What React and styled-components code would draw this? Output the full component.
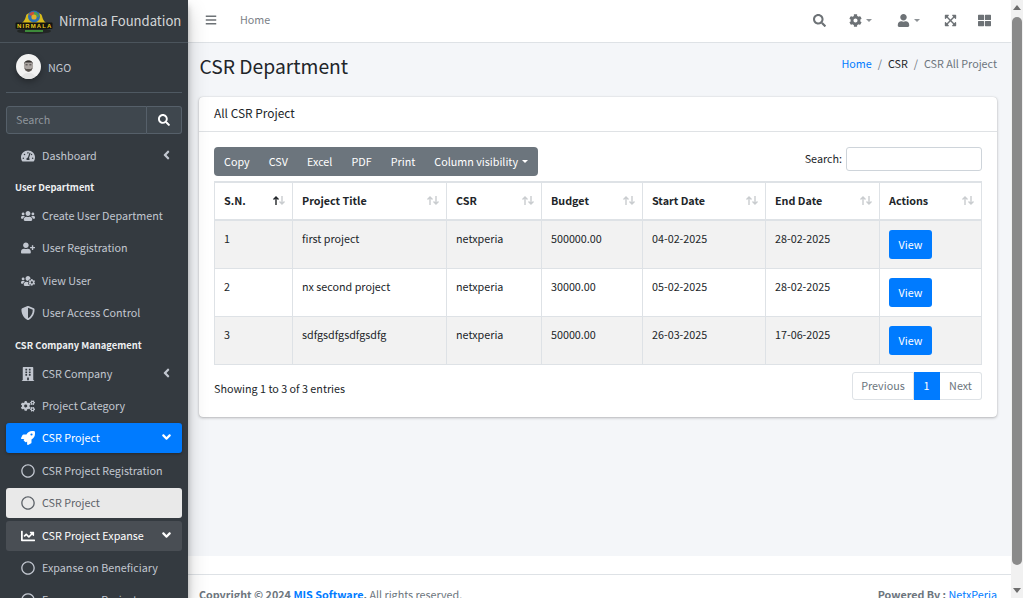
import React from "react";
import styled, { createGlobalStyle } from "styled-components";
import {
  FaAngleDown,
  FaAngleLeft,
  FaBars,
  FaBuilding,
  FaChartLine,
  FaCog,
  FaCogs,
  FaExpandArrowsAlt,
  FaRegCircle,
  FaRocket,
  FaSearch,
  FaShieldAlt,
  FaTachometerAlt,
  FaThLarge,
  FaUser,
  FaUserPlus,
  FaUsers,
  FaUsersCog,
} from "react-icons/fa";

const GlobalStyle = createGlobalStyle`
  html, body {
    margin: 0;
    height: 100%;
    overflow: hidden;
  }
  body {
    font-family: "Noto Sans CJK SC", "Noto Sans", sans-serif;
    font-size: 10.75px;
    line-height: 16px;
    color: #212529;
  }
  * {
    box-sizing: border-box;
  }
`;

const Page = styled.div`
  display: flex;
  width: 1023px;
  height: 598px;
  overflow: hidden;
`;

const Sidebar = styled.aside`
  width: 188px;
  flex-shrink: 0;
  height: 598px;
  overflow: hidden;
  background: #343a40;
  box-shadow: 0 10px 20px rgba(0, 0, 0, 0.2), 0 6px 6px rgba(0, 0, 0, 0.25);
  z-index: 2;
`;

const Brand = styled.div`
  display: flex;
  align-items: center;
  height: 43px;
  padding-left: 15px;
  gap: 6px;
  border-bottom: 1px solid #4b545c;
  color: rgba(255, 255, 255, 0.8);
  font-size: 13.1px;
  white-space: nowrap;
`;

const UserPanel = styled.div`
  display: flex;
  align-items: center;
  gap: 7px;
  height: 50px;
  margin: 0 6px;
  padding-left: 10px;
  border-bottom: 1px solid #4f5962;
  color: #c2c7d0;
`;

const Avatar = styled.div`
  width: 25px;
  height: 25px;
  margin-bottom: 2px;
  border-radius: 50%;
  overflow: hidden;
  box-shadow: 0 3px 6px rgba(0, 0, 0, 0.3);
`;

const SearchGroup = styled.div`
  display: flex;
  height: 28px;
  margin: 13px 6px 6.6px;
`;

const SearchField = styled.div`
  flex: 1;
  display: flex;
  align-items: center;
  padding-left: 9px;
  background: #3f474e;
  border: 1px solid #56606a;
  border-radius: 3px 0 0 3px;
  color: #8f969c;
`;

const SearchButton = styled.div`
  width: 35px;
  display: flex;
  align-items: center;
  justify-content: center;
  background: #3f474e;
  border: 1px solid #56606a;
  border-left: none;
  border-radius: 0 3px 3px 0;
  color: #fff;
  font-size: 12px;
`;

const Nav = styled.nav`
  padding: 0 6px;
`;

const NavItem = styled.div`
  display: flex;
  align-items: center;
  height: 30px;
  margin-bottom: 2.4px;
  padding: 0 9.5px 0 13px;
  border-radius: 3px;
  background: ${(p) =>
    p.$variant === "active"
      ? "#007bff"
      : p.$variant === "current"
        ? "#e9e9e9"
        : p.$variant === "open"
          ? "#494e54"
          : "transparent"};
  color: ${(p) =>
    p.$variant === "active" || p.$variant === "open"
      ? "#fff"
      : p.$variant === "current"
        ? "#5d6268"
        : "#c2c7d0"};
  box-shadow: ${(p) =>
    p.$variant === "active" ? "0 1px 3px rgba(0, 0, 0, 0.3)" : "none"};
`;

const NavIcon = styled.span`
  display: flex;
  justify-content: center;
  flex-shrink: 0;
  width: 18px;
  margin-right: 5px;

  svg {
    width: auto;
    height: 14px;
  }
`;

const NavLabel = styled.span`
  flex: 1;
  white-space: nowrap;
`;

const NavArrow = styled.span`
  display: flex;
  justify-content: center;
  width: 13px;
  font-size: 14px;
  margin-top: -2px;
`;

const NavHeader = styled.div`
  height: 28px;
  padding: 4px 0 0 9px;
  line-height: 20px;
  font-size: 9.4px;
  font-weight: 700;
  color: #eef0f2;
  white-space: nowrap;
`;

const Main = styled.div`
  flex: 1;
  min-width: 0;
  height: 598px;
  overflow: hidden;
  background: #fff;
  display: flex;
  flex-direction: column;
`;

const Topbar = styled.header`
  display: flex;
  align-items: center;
  flex-shrink: 0;
  height: 43px;
  padding: 0 20px 2px 17px;
  background: #fff;
  border-bottom: 1px solid #dee2e6;
  color: #6d7276;
`;

const TopHome = styled.span`
  margin-left: 23px;
  flex: 1;
  color: #7b8187;
`;

const TopIcon = styled.span`
  display: flex;
  align-items: center;
  width: ${(p) => p.$w}px;
  font-size: 13px;
`;

const Caret = styled.span`
  width: 0;
  height: 0;
  margin-left: 4px;
  border-top: 3px solid ${(p) => p.$color || "#8d9296"};
  border-left: 3px solid transparent;
  border-right: 3px solid transparent;
`;

const Content = styled.main`
  flex-shrink: 0;
  height: 513px;
  padding: 0 14px 0 11px;
  background: #f4f6f9;
`;

const TitleRow = styled.div`
  display: flex;
  align-items: center;
  justify-content: space-between;
  height: 54px;
`;

const Title = styled.h1`
  margin: 0 0 8px 0.5px;
  font-size: 19.3px;
  font-weight: 400;
  line-height: 24px;
  color: #212529;
`;

const Crumbs = styled.div`
  display: flex;
  gap: 6px;
  margin-bottom: 12px;
  color: #6c757d;
`;

const Crumb = styled.span`
  color: ${(p) => p.$color || "#6c757d"};
`;

const Card = styled.section`
  height: 320px;
  background: #fff;
  border-radius: 4px;
  box-shadow: 0 0 1px rgba(0, 0, 0, 0.2), 0 1px 3px rgba(0, 0, 0, 0.25);
`;

const CardHeader = styled.div`
  display: flex;
  align-items: center;
  height: 35px;
  padding: 0 0 2px 15px;
  border-bottom: 1px solid #dfe2e5;
  font-size: 11.9px;
  color: #212529;
`;

const CardBody = styled.div`
  padding: 15px 15px 0;
`;

const Toolbar = styled.div`
  display: flex;
  align-items: flex-start;
  justify-content: space-between;
  height: 34px;
`;

const ButtonGroup = styled.div`
  display: flex;
  align-items: center;
  height: 29px;
  padding: 0 0.5px;
  background: #6c757d;
  border-radius: 4px;
  color: #fff;
`;

const GroupButton = styled.span`
  display: flex;
  align-items: center;
  padding: 0 9.55px;
`;

const FilterLabel = styled.label`
  display: flex;
  align-items: center;
  gap: 4px;
  margin-left: -1px;
  color: #212529;
`;

const FilterInput = styled.div`
  width: 136px;
  height: 24px;
  background: #fff;
  border: 1px solid #ced4da;
  border-radius: 3px;
`;

const Table = styled.table`
  width: 767px;
  border-collapse: collapse;
  table-layout: fixed;
`;

const HeadCell = styled.th`
  position: relative;
  height: 38px;
  padding: 0 9px;
  border: 1px solid #dee2e6;
  border-top-width: 2px;
  border-bottom-width: 2px;
  font-weight: 700;
  text-align: left;
  color: #212529;
`;

const Sort = styled.svg`
  position: absolute;
  right: 6px;
  top: 12px;
`;

const Row = styled.tr`
  background: ${(p) => (p.$striped ? "#f2f2f2" : "#fff")};
`;

const Cell = styled.td`
  height: 48px;
  padding: 10px 9px 0;
  border: 1px solid #dee2e6;
  vertical-align: top;
  color: #212529;
`;

const ActionCell = styled(Cell)`
  padding-top: 9px;
`;

const ViewButton = styled.span`
  display: flex;
  align-items: center;
  justify-content: center;
  width: 43px;
  height: 29px;
  padding-top: 1px;
  background: #007bff;
  border-radius: 3px;
  color: #fff;
`;

const TableFooter = styled.div`
  display: flex;
  align-items: center;
  justify-content: space-between;
  height: 28px;
  margin-top: 7px;
`;

const Info = styled.span`
  margin-top: 6px;
`;

const Pagination = styled.div`
  display: flex;
  height: 28px;
`;

const PageLink = styled.span`
  display: flex;
  align-items: center;
  justify-content: center;
  width: ${(p) => p.$w}px;
  background: ${(p) => (p.$active ? "#007bff" : "#fff")};
  color: ${(p) => (p.$active ? "#fff" : "#6c757d")};
  border: 1px solid ${(p) => (p.$active ? "#007bff" : "#dee2e6")};
  border-left-width: ${(p) => (p.$first ? 1 : 0)}px;
  border-radius: ${(p) => p.$radius || 0};
`;

const FooterGap = styled.div`
  flex-shrink: 0;
  height: 18px;
  background: #fff;
`;

const Footer = styled.footer`
  display: flex;
  justify-content: space-between;
  flex-shrink: 0;
  height: 40px;
  padding: 12px 14px 0 11px;
  background: #fff;
  border-top: 1px solid #dee2e6;
  color: #6c757d;
`;

const Strong = styled.b`
  font-weight: 700;
  color: #6c757d;
`;

const Link = styled.span`
  font-weight: ${(p) => (p.$plain ? 400 : 700)};
  color: #007bff;
`;

const Scrollbar = styled.div`
  position: relative;
  width: 12px;
  flex-shrink: 0;
  height: 598px;
  background: #f1f1f1;
`;

const ScrollThumb = styled.div`
  position: absolute;
  top: 17px;
  left: 1px;
  width: 10px;
  height: 548px;
  background: #8a8a8a;
  border-radius: 5px;
`;

const ScrollArrow = styled.div`
  position: absolute;
  left: 2px;
  ${(p) => (p.$up ? "top: 5px;" : "bottom: 5px;")}
  width: 0;
  height: 0;
  border-left: 4px solid transparent;
  border-right: 4px solid transparent;
  ${(p) =>
    p.$up ? "border-bottom: 5px solid #6e6e6e;" : "border-top: 5px solid #6e6e6e;"}
`;

const LogoText = styled.text`
  font-family: "Liberation Sans", sans-serif;
  font-size: 6px;
  font-weight: 700;
  letter-spacing: 1.1px;
  fill: #e8c81e;
`;

const Logo = () => (
  <svg width="38" height="25" viewBox="0 0 38 25">
    <ellipse cx="19" cy="22" rx="17" ry="3" fill="#14150f" opacity="0.55" />
    <path d="M3 15 C8 15 10 11 11 7 C12 2 26 2 27 7 C28 11 30 15 35 15 Z" fill="#d8bb1c" />
    <circle cx="19" cy="7.5" r="6" fill="#2f6fb0" />
    <path d="M14 6 C15 3 18 2.5 19 3 L19 7.5 Z" fill="#c9503a" />
    <path d="M19 3 C22 3 24 5 24 8 L19 7.5 Z" fill="#4f9d4a" />
    <circle cx="19" cy="8" r="2.6" fill="#e0b02a" />
    <rect x="0.5" y="13.5" width="37" height="6.5" rx="1" fill="#14150f" />
    <LogoText x="2" y="19">NIRMALA</LogoText>
    <rect x="10" y="21" width="18" height="2" fill="#3d8a3a" />
  </svg>
);

const AvatarFace = () => (
  <svg width="25" height="25" viewBox="0 0 25 25">
    <rect width="25" height="25" fill="#f2f2f2" />
    <path d="M5 25 C6 20 9 19 12.5 19 C16 19 19 20 20 25 Z" fill="#e4e4e4" />
    <ellipse cx="12.5" cy="12" rx="4.6" ry="6" fill="#a9a3a0" />
    <path d="M8 10.5 C7.5 5 17.5 5 17 10.5 L16 8.6 L9 8.6 Z" fill="#34312f" />
    <path d="M8.4 13.5 C9 19 16 19 16.6 13.5 L15 15 L10 15 Z" fill="#57524f" />
    <path d="M9.6 10.8h2M13.4 10.8h2" stroke="#3a3634" strokeWidth="0.9" />
  </svg>
);

const SortArrows = ({ active }) => (
  <Sort width="14" height="11" viewBox="0 0 14 11">
    <path
      d="M4 10V2M1.5 4.5L4 2L6.5 4.5"
      fill="none"
      stroke={active ? "#212529" : "#c9cccf"}
      strokeWidth="1.4"
    />
    <path d="M10 1V9M7.5 6.5L10 9L12.5 6.5" fill="none" stroke="#c9cccf" strokeWidth="1.4" />
  </Sort>
);

const columns = [
  { name: "S.N.", width: 78, active: true },
  { name: "Project Title", width: 154 },
  { name: "CSR", width: 95 },
  { name: "Budget", width: 101 },
  { name: "Start Date", width: 123 },
  { name: "End Date", width: 114 },
  { name: "Actions", width: 102 },
];

const rows = [
  ["1", "first project", "netxperia", "500000.00", "04-02-2025", "28-02-2025"],
  ["2", "nx second project", "netxperia", "30000.00", "05-02-2025", "28-02-2025"],
  ["3", "sdfgsdfgsdfgsdfg", "netxperia", "50000.00", "26-03-2025", "17-06-2025"],
];

const navEntries = [
  { label: "Dashboard", icon: <FaTachometerAlt />, arrow: "left" },
  { header: "User Department" },
  { label: "Create User Department", icon: <FaUsers /> },
  { label: "User Registration", icon: <FaUserPlus /> },
  { label: "View User", icon: <FaUsersCog /> },
  { label: "User Access Control", icon: <FaShieldAlt /> },
  { header: "CSR Company Management" },
  { label: "CSR Company", icon: <FaBuilding />, arrow: "left" },
  { label: "Project Category", icon: <FaCogs /> },
  { label: "CSR Project", icon: <FaRocket />, arrow: "down", variant: "active" },
  { label: "CSR Project Registration", icon: <FaRegCircle /> },
  { label: "CSR Project", icon: <FaRegCircle />, variant: "current" },
  { label: "CSR Project Expanse", icon: <FaChartLine />, arrow: "down", variant: "open" },
  { label: "Expanse on Beneficiary", icon: <FaRegCircle /> },
  { label: "Expanse on Project", icon: <FaRegCircle /> },
];

const App = () => {
  return (
    <>
      <GlobalStyle />
      <Page>
        <Sidebar>
          <Brand>
            <Logo />
            Nirmala Foundation
          </Brand>
          <UserPanel>
            <Avatar>
              <AvatarFace />
            </Avatar>
            NGO
          </UserPanel>
          <SearchGroup>
            <SearchField>Search</SearchField>
            <SearchButton>
              <FaSearch />
            </SearchButton>
          </SearchGroup>
          <Nav>
            {navEntries.map((entry, i) =>
              entry.header ? (
                <NavHeader key={i}>{entry.header}</NavHeader>
              ) : (
                <NavItem key={i} $variant={entry.variant}>
                  <NavIcon>{entry.icon}</NavIcon>
                  <NavLabel>{entry.label}</NavLabel>
                  {entry.arrow && (
                    <NavArrow>
                      {entry.arrow === "left" ? <FaAngleLeft /> : <FaAngleDown />}
                    </NavArrow>
                  )}
                </NavItem>
              )
            )}
          </Nav>
        </Sidebar>
        <Main>
          <Topbar>
            <FaBars size={12} />
            <TopHome>Home</TopHome>
            <TopIcon $w={36}>
              <FaSearch />
            </TopIcon>
            <TopIcon $w={48}>
              <FaCog />
              <Caret />
            </TopIcon>
            <TopIcon $w={47}>
              <FaUser />
              <Caret />
            </TopIcon>
            <TopIcon $w={34}>
              <FaExpandArrowsAlt />
            </TopIcon>
            <TopIcon $w={13}>
              <FaThLarge />
            </TopIcon>
          </Topbar>
          <Content>
            <TitleRow>
              <Title>CSR Department</Title>
              <Crumbs>
                <Crumb $color="#007bff">Home</Crumb>
                <Crumb>/</Crumb>
                <Crumb $color="#212529">CSR</Crumb>
                <Crumb>/</Crumb>
                <Crumb>CSR All Project</Crumb>
              </Crumbs>
            </TitleRow>
            <Card>
              <CardHeader>All CSR Project</CardHeader>
              <CardBody>
                <Toolbar>
                  <ButtonGroup>
                    <GroupButton>Copy</GroupButton>
                    <GroupButton>CSV</GroupButton>
                    <GroupButton>Excel</GroupButton>
                    <GroupButton>PDF</GroupButton>
                    <GroupButton>Print</GroupButton>
                    <GroupButton>
                      Column visibility
                      <Caret $color="#fff" />
                    </GroupButton>
                  </ButtonGroup>
                  <FilterLabel>
                    Search:
                    <FilterInput />
                  </FilterLabel>
                </Toolbar>
                <Table>
                  <colgroup>
                    {columns.map((c) => (
                      <col key={c.name} width={c.width} />
                    ))}
                  </colgroup>
                  <thead>
                    <tr>
                      {columns.map((c) => (
                        <HeadCell key={c.name}>
                          {c.name}
                          <SortArrows active={c.active} />
                        </HeadCell>
                      ))}
                    </tr>
                  </thead>
                  <tbody>
                    {rows.map((row, i) => (
                      <Row key={row[0]} $striped={i % 2 === 0}>
                        {row.map((value, j) => (
                          <Cell key={j}>{value}</Cell>
                        ))}
                        <ActionCell>
                          <ViewButton>View</ViewButton>
                        </ActionCell>
                      </Row>
                    ))}
                  </tbody>
                </Table>
                <TableFooter>
                  <Info>Showing 1 to 3 of 3 entries</Info>
                  <Pagination>
                    <PageLink $w={62} $first $radius="3px 0 0 3px">
                      Previous
                    </PageLink>
                    <PageLink $w={26} $active>
                      1
                    </PageLink>
                    <PageLink $w={42} $radius="0 3px 3px 0">
                      Next
                    </PageLink>
                  </Pagination>
                </TableFooter>
              </CardBody>
            </Card>
          </Content>
          <FooterGap />
          <Footer>
            <span>
              <Strong>
                Copyright © 2024 <Link>MIS Software</Link>.
              </Strong>{" "}
              All rights reserved.
            </span>
            <Strong>
              Powered By : <Link $plain>NetxPeria</Link>
            </Strong>
          </Footer>
        </Main>
        <Scrollbar>
          <ScrollArrow $up />
          <ScrollThumb />
          <ScrollArrow />
        </Scrollbar>
      </Page>
    </>
  );
};

export default App;
